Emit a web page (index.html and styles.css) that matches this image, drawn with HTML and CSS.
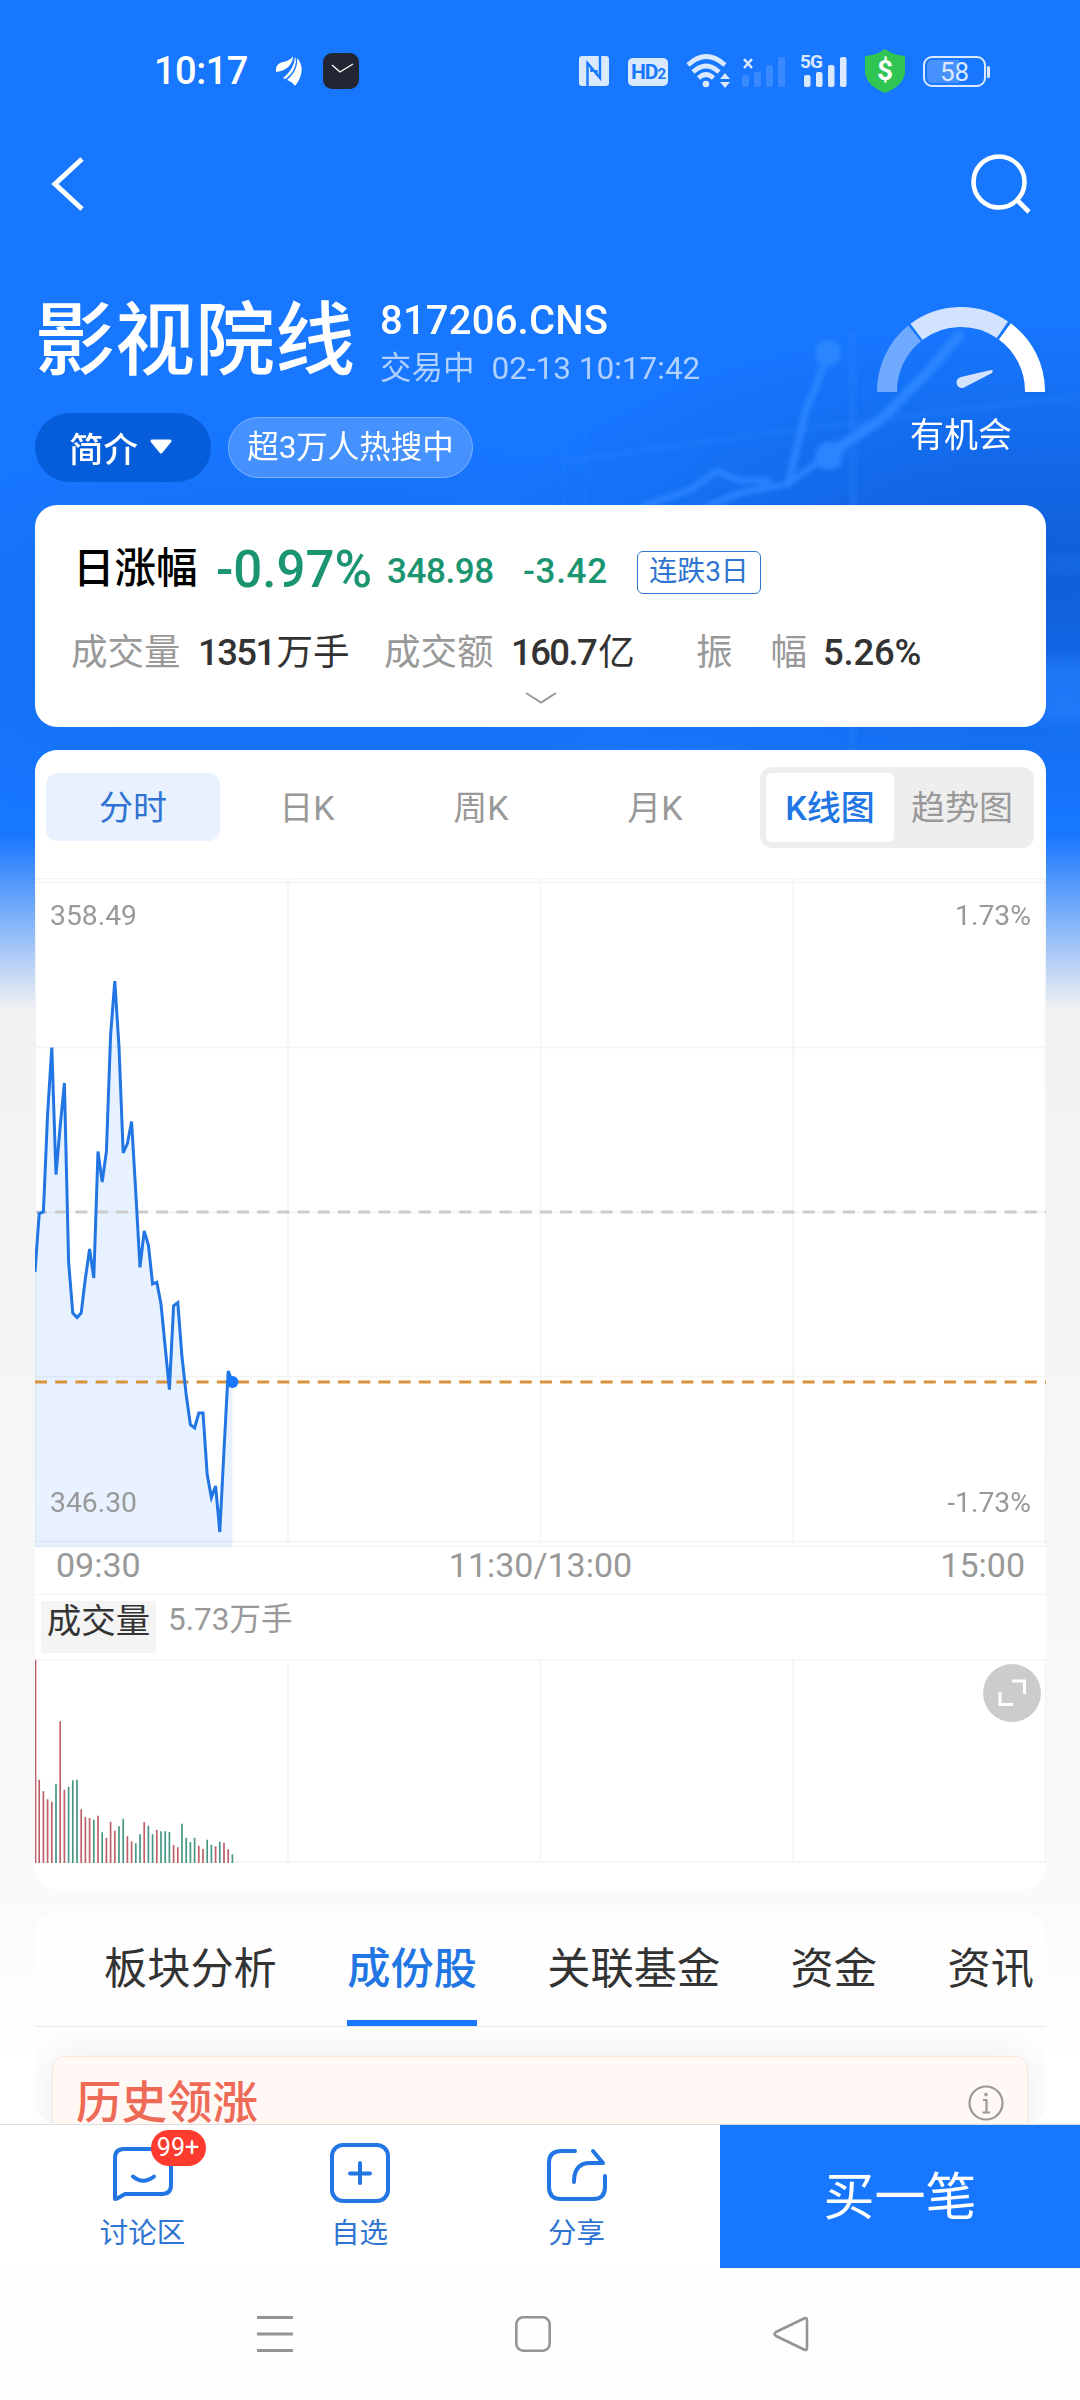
FILE: index.html
```html
<!DOCTYPE html>
<html lang="zh-CN">
<head>
<meta charset="utf-8">
<title>影视院线</title>
<link rel="stylesheet" href="styles.css">
</head>
<body>
<div class="phone">
  <svg class="backdrop" width="1080" height="1010" viewBox="0 0 1080 1010">
    <defs>
      <radialGradient id="shade"><stop offset="0" stop-color="#0d55c8" stop-opacity=".75"/><stop offset="1" stop-color="#0d55c8" stop-opacity="0"/></radialGradient>
      <linearGradient id="fade" x1="0" y1="0" x2="0" y2="1"><stop offset="0" stop-color="#f2f2f2" stop-opacity="0"/><stop offset=".5" stop-color="#f2f2f2" stop-opacity=".5"/><stop offset="1" stop-color="#f2f2f2"/></linearGradient>
      <filter id="soft"><feGaussianBlur stdDeviation="2.500"/></filter>
      <filter id="softer" x="-100%" y="-20%" width="300%" height="140%"><feGaussianBlur stdDeviation="7"/></filter>
    </defs>
    <rect width="1080" height="1010" fill="#1777ff"/>
    <ellipse cx="1040" cy="570" rx="560" ry="250" fill="url(#shade)"/>
    <ellipse cx="300" cy="640" rx="500" ry="220" fill="url(#shade)" opacity=".4"/>
    <g fill="none" stroke="#2a86ff" filter="url(#soft)">
      <path d="M829 454L880 420L925 375L962 332" stroke-width="10"/>
      <path d="M824 366L806 410L788 484" stroke-width="7"/>
      <path d="M640 507L690 490L717 471L738 480L770 481M705 507L740 493L788 484L829 454" stroke-width="6"/>
      <path d="M560 462Q820 425 1080 396" stroke-width="5" opacity=".35"/>
      <path d="M853 330V770" stroke-width="6" opacity=".35"/>
      <path d="M564 400V510M585 400V510" stroke-width="4" opacity=".2"/>
      <circle cx="828" cy="353" r="13" stroke="none" fill="#2a86ff"/>
      <circle cx="829" cy="456" r="14" stroke="none" fill="#2a86ff"/>
    </g>
    <g fill="#2482ff" filter="url(#softer)"><rect x="1040" y="558" width="50" height="14" opacity=".35"/><rect x="1040" y="660" width="50" height="64" opacity=".6"/></g>
    <rect y="835" width="1080" height="176" fill="url(#fade)"/>
  </svg>

  <header class="status">
    <span class="clock">10:17</span>
    <svg class="leaf" width="28" height="32" viewBox="0 0 28 32" fill="#fff"><path d="M1 17C0 8 7 7 12 6C15 4.500 17 3 18 1C18 9 12 16 1 17Z"/><path d="M8 23C13 19 19 13 20 1.500C23 9 18 19 10 24Z"/><path d="M12 25C19 19 23 12 22 3C29 10 28 21 20 31C18 28 15 26 12 25Z"/></svg>
    <svg class="watch" width="36" height="36" viewBox="0 0 36 36"><rect width="36" height="36" rx="9" fill="#222633"/><path d="M9 12L17 19L30 11" fill="none" stroke="#fff" stroke-width="1.4"/></svg>
    <div class="signals">
      <svg class="nfc" width="30" height="30" viewBox="0 0 30 30"><rect width="30" height="30" rx="3" fill="#dbe9ff"/><path d="M8.500 30V7L21 22V0M12.500 16V11M17.500 14V19" fill="none" stroke="#1777ff" stroke-width="2.400"/></svg>
      <span class="hd">HD<small>2</small></span>
      <svg class="wifi" width="44" height="34" viewBox="0 0 44 34"><g fill="none" stroke="#dbe9ff" stroke-width="4.6"><path d="M2 11Q20 -6 39 11"/><path d="M7 18Q20 6 33 18"/><path d="M12.5 24Q20 17 27.500 24"/></g><circle cx="20" cy="30" r="3.300" fill="#dbe9ff"/><path d="M34 25L39 19L44 25ZM34 28L39 34L44 28Z" fill="#dbe9ff"/></svg>
      <svg class="sim1" width="44" height="32" viewBox="0 0 44 32"><path d="M2 4L10 13M10 4L2 13" stroke="#dbe9ff" stroke-width="2.6"/><g fill="#3a89ff"><rect y="20" width="7" height="12" rx="2"/><rect x="12" y="17" width="7" height="15" rx="2"/><rect x="24" y="10" width="7" height="22" rx="2"/><rect x="36" y="2" width="7" height="30" rx="2"/></g></svg>
      <span class="sim2"><b>5G</b><svg width="47" height="32" viewBox="0 0 47 32" fill="#dbe9ff"><rect x="4" y="20" width="6.500" height="12" rx="2"/><rect x="16" y="17" width="6.500" height="15" rx="2"/><rect x="28" y="10" width="6.500" height="22" rx="2"/><rect x="40" y="2" width="6.500" height="30" rx="2"/></svg></span>
      <span class="shield"><svg width="40" height="44" viewBox="0 0 40 44"><path d="M20 0Q28 6 40 7V24Q38 37 20 44Q2 37 0 24V7Q12 6 20 0Z" fill="#30c553"/></svg><b>$</b></span>
      <span class="battery">58</span>
    </div>
  </header>

  <nav class="navbar">
    <svg width="40" height="60" viewBox="0 0 40 60" fill="none" stroke="#fff" stroke-width="5"><path d="M34 5L7 30L34 55"/></svg>
    <svg width="64" height="64" viewBox="0 0 64 64" fill="none" stroke="#fff" stroke-width="4.600"><circle cx="31" cy="30" r="25.500"/><path d="M49 48L61 60"/></svg>
  </nav>

  <section class="hero">
    <div class="identity">
      <div class="titleline">
        <h1>影视院线</h1>
        <div class="meta"><div class="code">817206.CNS</div><div class="time">交易中<span>02-13 10:17:42</span></div></div>
      </div>
      <div class="pills">
        <div class="intro">简介<svg width="24" height="16" viewBox="0 0 24 16"><path d="M3 2H21L12 13Z" fill="#fff" stroke="#fff" stroke-width="3" stroke-linejoin="round"/></svg></div>
        <div class="hot">超3万人热搜中</div>
      </div>
    </div>
    <div class="gauge">
      <svg width="168" height="87" viewBox="0 0 168 87">
        <g fill="none" stroke-width="20">
          <path d="M10 86V85A74 74 0 0 1 37.600 27.400" stroke="#70aaff"/>
          <path d="M39.500 25.800A74 74 0 0 1 125.400 23.700" stroke="#d3e3ff"/>
          <path d="M127.800 25.400A74 74 0 0 1 158 85V86" stroke="#fff"/>
        </g>
        <path d="M84 71L114 64Q117 64 115 67L88 81A5.500 5.500 0 1 1 84 71Z" fill="#d3e3ff"/>
      </svg>
      <div>有机会</div>
    </div>
  </section>

  <section class="card quote">
    <div class="row1"><span class="label">日涨幅</span><span class="pct">-0.97%</span><span class="price">348.98</span><span class="delta">-3.42</span><span class="tag">连跌3日</span></div>
    <div class="row2"><span class="k">成交量</span><span class="v v1"><i>1351</i>万手</span><span class="k">成交额</span><span class="v v2"><i>160.7</i>亿</span><span class="k wide"><span>振</span><span>幅</span></span><span class="v v3"><i>5.26%</i></span></div>
    <svg class="more" width="32" height="14" viewBox="0 0 32 14" fill="none" stroke="#999" stroke-width="2"><path d="M1 2L16 11.500L31 2"/></svg>
  </section>

  <section class="card chart">
    <div class="periods">
      <div class="tabs4"><span class="on">分时</span><span>日K</span><span>周K</span><span>月K</span></div>
      <div class="toggle"><b>K线图</b><span>趋势图</span></div>
    </div>
    <div class="plot">
      <svg width="1011" height="669" viewBox="0 0 1011 669">
        <g stroke="#f3f3f4" stroke-width="1.5"><path d="M0 0.500H1011M0 4.500H1011M0 169.500H1011M0 334.500H1011M0 498.500H1011M0 663.500H1011M0 668.500H1011M253 0V669M505.500 0V669M758 0V669M.5 0V669M1010.500 0V669"/></g>
        <path d="M0 669V394L4.200 335.600 8.400 334 12.600 236 16.800 169.500 21 296.500 25.200 248 29.400 205 33.600 384 37.800 435 42 439.600 46.200 435 50.400 400 54.600 371 58.800 400 63 273.500 67.200 304 71.400 273.500 75.600 157 79.800 103 84 169 88.200 275 92.400 265.600 96.600 243.500 100.800 315 105 389.400 109.200 353 113.400 367 117.600 406 121.800 404.400 126 426 130.200 469 134.400 511.600 138.600 427.700 142.800 424.600 147 479 151.200 516.700 155.400 546.800 159.600 550 163.800 535 168 535 172.200 596.600 176.400 619.500 180.600 608 184.800 654 189 572 193.200 493 197.400 504V669Z" fill="#1777ff" fill-opacity=".1"/>
        <path d="M1 334H1011" stroke="#ccc" stroke-width="3" stroke-dasharray="12 8.200" stroke-dashoffset="1"/>
        <path d="M0 504H1011" stroke="#d8923a" stroke-width="3" stroke-dasharray="12 8.200"/>
        <polyline fill="none" stroke="#2176e4" stroke-width="3" points="0,394 4.200,335.600 8.400,334 12.600,236 16.800,169.500 21,296.500 25.200,248 29.400,205 33.600,384 37.800,435 42,439.600 46.200,435 50.400,400 54.600,371 58.800,400 63,273.500 67.200,304 71.400,273.500 75.600,157 79.800,103 84,169 88.200,275 92.400,265.600 96.600,243.500 100.800,315 105,389.400 109.200,353 113.400,367 117.600,406 121.800,404.400 126,426 130.200,469 134.400,511.600 138.600,427.700 142.800,424.600 147,479 151.200,516.700 155.400,546.800 159.600,550 163.800,535 168,535 172.200,596.600 176.400,619.500 180.600,608 184.800,654 189,572 193.200,493 197.400,504"/>
        <circle cx="197.400" cy="504" r="6" fill="#1777ff"/>
      </svg>
      <div class="scale"><div><span>358.49</span><span>1.73%</span></div><div><span>346.30</span><span>-1.73%</span></div></div>
    </div>
    <div class="axis"><span>09:30</span><span>11:30/13:00</span><span>15:00</span></div>
    <div class="legend"><span class="name">成交量</span><span class="amount">5.73万手</span></div>
    <div class="volume">
      <svg width="1011" height="204" viewBox="0 0 1011 204">
        <path stroke="#f3f3f4" stroke-width="1.5" d="M0 .5H1011M0 203H1011M253 0V203M505.500 0V203M758 0V203M1010.500 0V203"/>
        <path stroke="#bd6069" stroke-width="1.7" d="M.5 204v-203M4.200 204v-83.300M8.400 204v-71.700M12.600 204v-63.700M16.800 204v-61.300M25.200 204v-141.700M29.400 204v-73.300M46.200 204v-53.700M50.400 204v-46M54.600 204v-45M63 204v-47.300M71.400 204v-25.300M75.600 204v-41.300M79.800 204v-32.300M92.400 204v-26.700M96.600 204v-21.700M109.200 204v-41M121.800 204v-33.300M138.600 204v-18M142.800 204v-15.700M163.800 204v-17.300M168 204v-14M180.600 204v-16.700M189 204v-20.300M193.200 204v-13.700"/>
        <path stroke="#479783" stroke-width="1.700" d="M21 204v-79.300M33.600 204v-76.300M37.800 204v-82.700M42 204v-83.300M58.800 204v-43.300M67.200 204v-30.700M84 204v-36.700M88.200 204v-44.300M100.800 204v-19.700M105 204v-28.700M113.400 204v-37.300M117.600 204v-28.700M126 204v-31.700M130.200 204v-31.700M134.400 204v-31M147 204v-39.300M151.200 204v-25.300M155.400 204v-21M159.600 204v-25.300M172.200 204v-23.300M176.400 204v-18.300M184.800 204v-21.300M197.400 204v-8.700"/>
      </svg>
      <svg class="expand" width="58" height="58" viewBox="0 0 58 58"><circle cx="29" cy="29" r="29" fill="#ccc"/><path d="M29 17H41.500V30M17 28V40.500H30" fill="none" stroke="#fff" stroke-width="3"/></svg>
    </div>
  </section>

  <section class="card detail">
    <div class="tabs"><span>板块分析</span><span class="on">成份股</span><span>关联基金</span><span>资金</span><span>资讯</span></div>
    <div class="leader"><span>历史领涨</span>
      <svg width="36" height="36" viewBox="0 0 36 36" fill="none" stroke="#999" stroke-width="2.200"><circle cx="18" cy="18" r="16.500"/><path d="M15 15H18.500V27M14.500 27.500H22"/><circle cx="18" cy="9.500" r="1.400" fill="#999" stroke-width="1"/></svg>
    </div>
  </section>

  <footer class="actions">
    <div class="act"><span class="ico"><svg width="64" height="64" viewBox="0 0 64 64" fill="none" stroke="#2176e4" stroke-width="4" stroke-linecap="round" stroke-linejoin="round"><path d="M4 58V17Q4 8 13 8H51Q60 8 60 17V44Q60 53 51 53H14L7 57Q4 59 4 55Z"/><path d="M22 35.500Q32 44 43 35.500"/></svg><em>99+</em></span>讨论区</div>
    <div class="act"><span class="ico"><svg width="64" height="64" viewBox="0 0 64 64" fill="none" stroke="#2176e4" stroke-width="4" stroke-linecap="round"><rect x="4" y="4" width="56" height="56" rx="11"/><path d="M32 22V42M22 32.500H42"/></svg></span>自选</div>
    <div class="act"><span class="ico"><svg width="64" height="64" viewBox="0 0 64 64" fill="none" stroke="#2176e4" stroke-width="4" stroke-linecap="round" stroke-linejoin="round"><path d="M30 10H16Q4 10 4 22V46Q4 58 16 58H48Q60 58 60 46V35"/><path d="M29 41C29 29 34 22 45 22H58L48 10"/></svg></span>分享</div>
    <div class="buy">买一笔</div>
  </footer>

  <div class="system">
    <svg width="36" height="36" viewBox="0 0 36 36" stroke="#949494" stroke-width="2.800"><path d="M0 1.500H36M0 18H36M0 34.500H36"/></svg>
    <svg width="36" height="36" viewBox="0 0 36 36" fill="none" stroke="#949494" stroke-width="2.600"><rect x="1.300" y="1.300" width="33.400" height="33.400" rx="7"/></svg>
    <svg width="36" height="36" viewBox="0 0 36 36" fill="none" stroke="#949494" stroke-width="2.600" stroke-linejoin="round"><path d="M31 2.500L3 16Q0 18 3 20L31 33.500Q34 35 34 32V4Q34 1 31 2.500Z"/></svg>
  </div>
</div>
</body>
</html>
```
FILE: styles.css
```css
* { box-sizing: border-box; }
body { margin: 0; font-family: Roboto, "Noto Sans CJK SC", sans-serif; }
svg { display: block; flex: none; }
.phone { position: relative; width: 1080px; height: 2400px; overflow: hidden; display: flex; flex-direction: column; background: linear-gradient(#f2f2f2 1000px, #fafafa 1900px, #fff 2060px); white-space: nowrap; }
.backdrop { position: absolute; left: 0; top: 0; }
.phone > :not(.backdrop) { position: relative; flex: none; }

.status { height: 142px; padding: 0 90px 0 154px; display: flex; align-items: center; color: #fff; }
.clock { width: 121px; font-size: 38px; font-weight: 500; letter-spacing: -.5px; }
.watch { margin-left: 20px; }
.signals { margin-left: auto; display: flex; align-items: center; }
.hd { width: 40px; height: 28px; margin: 2px 18px 0 19px; border-radius: 5px; background: #dbe9ff; color: #1777ff; font: 700 21px/28px Roboto, sans-serif; text-align: center; letter-spacing: -1px; }
.hd small { font-size: 15px; }
.wifi { margin-top: -1px; }
.sim1 { margin-left: 12px; }
.sim2 { position: relative; margin-left: 14px; color: #dbe9ff; }
.sim2 b { position: absolute; left: 0; top: -4px; font-size: 19px; line-height: 22px; letter-spacing: -1px; }
.shield { position: relative; margin-left: 18px; }
.shield b { position: absolute; inset: 0; font-size: 28px; line-height: 43px; text-align: center; }
.battery { position: relative; width: 63px; height: 31px; margin: 0 4px 0 18px; border: 2px solid #dbe9ff; border-radius: 9px; background: linear-gradient(90deg, #4791ff 58%, transparent 58%) content-box; padding: 2px; color: #dbe9ff; font-size: 26px; line-height: 24px; text-align: center; }
.battery::after { content: ""; position: absolute; right: -6px; top: 8px; width: 3px; height: 12px; border-radius: 2px; background: #dbe9ff; }

.navbar { height: 84px; padding: 0 48px 0 48px; display: flex; align-items: center; justify-content: space-between; }

.hero { height: 279px; padding: 73px 35px 0; display: flex; justify-content: space-between; color: #fff; }
.titleline { height: 80px; padding-top: 3px; display: flex; align-items: center; gap: 25px; }
h1 { margin: 0; font-size: 80px; line-height: 80px; font-weight: 500; }
.meta { padding-top: 5px; }
.code { height: 44px; font-size: 40px; line-height: 44px; font-weight: 500; letter-spacing: .2px; }
.time { height: 38px; margin-top: 6px; font-size: 31.500px; line-height: 39px; color: #b0d0ff; }
.time span { margin-left: 17px; }
.pills { margin-top: 34px; display: flex; align-items: center; gap: 17px; }
.intro { width: 176px; height: 69px; padding: 0 4px 2px 0; border-radius: 35px; background: #055dda; display: flex; align-items: center; justify-content: center; gap: 11px; font-size: 34.500px; font-weight: 500; }
.hot { width: 245px; height: 61px; border: 1px solid #7db1ff; border-radius: 31px; background: rgba(255,255,255,.2); font-size: 31.500px; line-height: 59px; text-align: center; }
.gauge { width: 168px; padding-top: 7px; text-align: center; font-size: 34px; line-height: 40px; }
.gauge div { margin-top: 22px; }

.card { margin: 0 34px 0 35px; border-radius: 22px; background: #fff; }
.quote { height: 222px; padding-top: 34px; }
.row1 { height: 60px; padding-left: 38px; display: flex; align-items: center; color: #1a9471; font-weight: 500; }
.label { width: 143px; color: #000; font-size: 41.500px; line-height: 60px; padding-bottom: 1px; }
.pct { width: 171px; font-size: 51px; }
.price, .delta { padding-top: 5px; font-size: 35px; letter-spacing: -.4px; }
.price { width: 136px; }
.delta { width: 114px; letter-spacing: .7px; }
.tag { margin-top: 6px; width: 124px; height: 43px; border: 1.500px solid #2f74d0; border-radius: 6px; color: #2f74d0; font-size: 28px; font-weight: 400; line-height: 40px; text-align: center; }
.row2 { height: 54px; margin-top: 27px; padding-left: 36px; display: flex; align-items: center; font-size: 36.500px; line-height: 54px; color: #333; }
.k { flex: none; width: 110px; color: #999; }
.v { flex: none; margin-left: 17px; }
.v i { font-style: normal; font-weight: 500; letter-spacing: -1.600px; margin-right: 2px; }
.v1 { width: 186px; }
.v2 { width: 185px; margin-left: 17px; }
.wide { width: 111px; display: flex; justify-content: space-between; }
.v3 { margin-left: 16px; }
.v3 i { letter-spacing: -.200px; }
.more { margin: 11px auto 0; }

.chart { height: 1139px; margin-top: 23px; }
.periods { height: 128px; padding: 17px 12px 0 11px; display: flex; justify-content: space-between; font-size: 34px; color: #999; text-align: center; }
.tabs4 { display: grid; grid-template-columns: repeat(4, 174px); height: 68px; margin-top: 6px; line-height: 70px; }
.tabs4 .on { height: 68px; background: #e8f1fd; color: #2f74d0; border-radius: 12px; }
.toggle { width: 274px; height: 81px; padding: 6px; border-radius: 12px; background: #eee; display: flex; line-height: 70px; }
.toggle b { width: 128px; height: 69px; border-radius: 6px; background: #fff; color: #2176e4; font-weight: 500; }
.toggle span { flex: 1; padding-left: 2px; }
.plot { position: relative; height: 669px; }
.scale { position: absolute; inset: 0; padding: 21px 15px 27px; display: flex; flex-direction: column; justify-content: space-between; font-size: 28.300px; line-height: 34px; color: #999; }
.scale div { display: flex; justify-content: space-between; }
.axis { height: 48px; padding: 0 21px; display: flex; justify-content: space-between; font-size: 34px; line-height: 37px; color: #999; border-bottom: 1.500px solid #f3f3f4; }
.legend { height: 64px; padding: 6px 0 0 6px; display: flex; color: #999; }
.name { width: 115px; height: 52px; background: #f4f4f4; color: #333; font-size: 34.500px; line-height: 41px; text-align: center; }
.amount { margin-left: 12px; font-size: 31.500px; line-height: 37px; }
.volume { position: relative; }
.expand { position: absolute; right: 5px; top: 5px; }

.detail { height: 212px; margin-top: 23px; background: #fefefe; overflow: hidden; }
.tabs { height: 115px; padding-left: 69px; border-bottom: 1.500px solid #e9e9e9; display: flex; gap: 70.500px; font-size: 43.200px; line-height: 116px; color: #333; }
.tabs .on { height: 114px; color: #2176e4; font-weight: 500; border-bottom: 6px solid #1777ff; }
.leader { height: 120px; margin: 29px 18px 0 17px; padding: 0 23px 26px; border: 1.500px solid #fde5d6; border-radius: 12px; background: #fff8f5; box-shadow: 0 0 36px rgba(60,80,90,.1); display: flex; align-items: center; justify-content: space-between; color: #ee6a56; font-size: 45.500px; font-weight: 500; }
.leader span { line-height: 60px; padding-top: 2px; }

.actions { height: 144px; border-top: 1.500px solid #ddd; background: #fff; display: flex; color: #2f74d0; font-size: 28.500px; }
.act { width: 217px; padding-top: 16px; line-height: 34px; display: flex; flex-direction: column; align-items: center; }
.act:nth-child(1) { margin-left: 34px; }
.ico { position: relative; margin-bottom: 12px; }
.ico em { position: absolute; left: 40px; top: -11px; width: 55px; height: 36px; border-radius: 18px; background: #ff3b30; color: #fff; font-style: normal; font-size: 25px; line-height: 36px; text-align: center; }
.buy { margin-left: auto; width: 360px; background: #1777ff; color: #fff; font-size: 51px; line-height: 146px; height: 143px; text-align: center; }
.system { flex: none; height: 132px; background: #fefefe; padding: 48px 271px 0 257px; display: flex; justify-content: space-between; }
```
